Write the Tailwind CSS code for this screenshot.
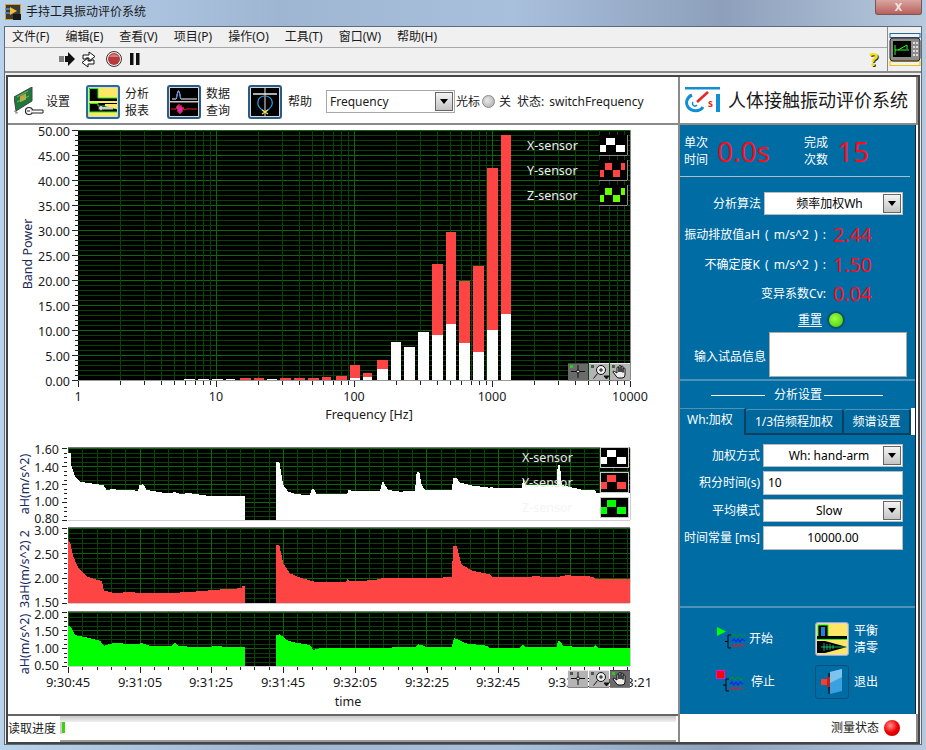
<!DOCTYPE html>
<html lang="zh">
<head>
  <meta charset="UTF-8">
  <title>手持工具振动评价系统</title>
  <script src="https://cdn.jsdelivr.net/npm/@tailwindcss/browser@4"></script>
</head>
<body class="relative w-[926px] h-[750px] overflow-hidden font-['Noto_Sans','Noto_Sans_CJK_SC',sans-serif] text-[#1a1a1a] bg-[linear-gradient(90deg,#b9d3ec_0%,#9fb6d2_30%,#a9c0dc_55%,#8d9fbb_78%,#b7c9dd_100%)]">

<!-- title bar -->
<div class="flex items-center h-[26px] pl-[5px] pb-[3px]">
  <svg width="16" height="16" viewBox="0 0 16 16">
    <rect x="0" y="0" width="16" height="16" fill="#d8a02a"/>
    <rect x="1" y="1" width="14" height="14" fill="#3a3a3a"/>
    <path d="M5 3 L12 7 L5 11 Z" fill="#f0c030"/>
    <path d="M0 5 H5 M0 9 H5" stroke="#5a8fd0" stroke-width="1.5"/>
    <rect x="8" y="10" width="8" height="6" fill="#1a1a1a"/>
  </svg>
  <span class="ml-[5px] text-[12px] leading-none">手持工具振动评价系统</span>
  <div class="absolute top-0 left-[875px] w-[47px] h-[15px] rounded-b-[3px] border border-t-0 border-[#7a5555] bg-[linear-gradient(#d9a5a0,#b8605c)] flex items-center justify-center">
    <span class="text-white/80 text-[11px] font-bold leading-[12px]">X</span>
  </div>
</div>

<!-- window -->
<div class="ml-[4px] w-[918px] h-[719px] border border-[#5d6b7a] bg-[#f0f0f0] flex flex-col">
  <div class="flex h-[46px] border-b-2 border-[#8a8a8a]">
    <div class="flex-1 flex flex-col">
      <!-- menu -->
      <div class="flex items-center h-[21px] pl-[7px] gap-[16px] text-[12px] border-b border-[#a8a8a8] mr-[-34px] relative">
        <span>文件(F)</span><span>编辑(E)</span><span>查看(V)</span><span>项目(P)</span><span>操作(O)</span><span>工具(T)</span><span>窗口(W)</span><span>帮助(H)</span>
      </div>
      <!-- run toolbar -->
      <div class="flex items-center h-[24px] pl-[54px]">
        <svg width="17" height="16" viewBox="0 0 17 16">
          <path d="M0 6H1M0 8H1M0 10H1M2 5V11M4 5V11" stroke="#111" stroke-width="1"/>
          <path d="M6 5H9V1L16 8L9 15V11H6Z" fill="#111"/>
        </svg>
        <svg class="ml-[4px]" width="17" height="17" viewBox="0 0 17 17">
          <path d="M3 8 V4 H9 V1 L15 5.5 L9 10 V7 H6 V8 Z" fill="#fff" stroke="#111"/>
          <path d="M14 9 V13 H8 V16 L2 11.5 L8 7 V10 H11 V9 Z" fill="#fff" stroke="#111"/>
        </svg>
        <svg class="ml-[9px]" width="16" height="16" viewBox="0 0 16 16">
          <circle cx="8" cy="8" r="7.5" fill="#f4f4f4" stroke="#333"/>
          <circle cx="8" cy="8" r="6" fill="#b83a3a"/>
          <path d="M3 6 A6 6 0 0 1 13 6 Z" fill="#d67a7a"/>
        </svg>
        <svg class="ml-[8px]" width="10" height="12" viewBox="0 0 10 12">
          <rect x="0" y="0" width="3.5" height="12" fill="#111"/>
          <rect x="6" y="0" width="3.5" height="12" fill="#111"/>
        </svg>
      </div>
    </div>
    <!-- help + VI icon -->
    <div class="relative flex items-end pb-[3px] pr-[9px]">
      <span class="text-[18px] leading-none font-bold text-[#f2e313] [text-shadow:1px_1px_0_#222]">?</span>
    </div>
    <div class="w-[34px] border-l border-[#8a8a8a] flex flex-col items-center justify-center relative z-10 bg-[#f0f0f0]">
      <svg width="32" height="33" viewBox="0 0 32 33">
        <rect x="1" y="0.5" width="30" height="4" fill="none" stroke="#1f6a9a"/>
        <rect x="1" y="28.5" width="30" height="4" fill="none" stroke="#f2c200"/>
        <rect x="1" y="5" width="30" height="23" rx="3" fill="#8c8c8c" stroke="#222"/>
        <rect x="4" y="8" width="18" height="16" fill="#000"/>
        <path d="M6 12V22M6 17H20M9 17L18 12V16" stroke="#2f2" fill="none"/>
        <g fill="#ddd"><rect x="24" y="9" width="2" height="2"/><rect x="27" y="9" width="2" height="2"/><rect x="24" y="13" width="2" height="2"/><rect x="27" y="13" width="2" height="2"/><rect x="24" y="17" width="2" height="2"/><rect x="27" y="17" width="2" height="2"/><rect x="24" y="21" width="2" height="2"/><rect x="27" y="21" width="2" height="2"/></g>
      </svg>
    </div>
  </div>

  <!-- panes -->
  <div class="mt-[2px] mx-[1px] h-[669px] border-2 border-[#444] flex bg-white">
    <!-- left -->
    <div class="w-[672px] flex flex-col border-r-2 border-[#8a8a8a]">
      <!-- front panel toolbar -->
      <div class="relative h-[48px] pt-[3px] border-b-2 border-[#8a8a8a] flex items-center text-[12px]">
        <svg class="ml-[6px]" width="30" height="29" viewBox="0 0 30 29">
          <path d="M0 10 L18 0 V14 L2 24 Z" fill="#1e7a3a" stroke="#444"/>
          <rect x="6" y="8" width="6" height="6" fill="#c9a23a" transform="skewY(-25) translate(0 4)"/>
          <path d="M3 10 L14 4 M3 15 L15 9" stroke="#7ad07a" stroke-width="0.8"/>
          <path d="M0 24 L4 26 M2 24 V27" stroke="#888"/>
          <circle cx="15" cy="24" r="3.5" fill="#fff" stroke="#222" stroke-width="1.2"/>
          <path d="M18 23 H29 V26 H18 M13 24 H16" fill="#fff" stroke="#222" stroke-width="1"/>
        </svg>
        <span class="ml-[2px] w-[24px]">设置</span>
        <div class="ml-[16px] w-[34px] h-[34px] rounded-[3px] border-2 border-[#2a6a96] bg-[#d8d8d8] p-[1px]">
          <svg width="28" height="28" viewBox="0 0 28 28">
            <rect width="28" height="28" fill="#ffe766"/>
            <rect x="0" y="0" width="9" height="13" fill="#000"/>
            <rect x="9" y="10" width="19" height="3" fill="#000"/>
            <path d="M0.5 13 V0.5 H9 V10 H28" stroke="#1f1" fill="none"/>
            <path d="M0 15 H28 V24 L0 24 Z" fill="#000"/>
            <path d="M0.5 24 V15.5 H9 V18 H16 L28 21" stroke="#1f1" fill="none"/>
            <path d="M16 18 L28 21 V16 H16Z" fill="#ffe766"/>
            <path d="M0.5 24 H28" stroke="#1f1"/>
            <circle cx="12" cy="20" r="2.5" fill="#ddd" stroke="#333"/><rect x="14" y="19" width="10" height="2.5" fill="#ccc"/>
          </svg>
        </div>
        <div class="ml-[5px] w-[24px] leading-[17px]">分析<br>报表</div>
        <div class="ml-[18px] w-[34px] h-[34px] rounded-[3px] border-2 border-[#2a5a86] bg-[#d8d8d8] p-[1px]">
          <svg width="28" height="28" viewBox="0 0 28 28">
            <rect width="28" height="28" fill="#000"/>
            <rect y="13" width="28" height="1.5" fill="#c8c8c8"/>
            <path d="M2 11 H6 C7 11 7 3 8.5 3 C10 3 10 11 11 11 H27" stroke="#fff" fill="none"/>
            <path d="M5 11 C7 11 7 4 8.5 4 C10 4 10 11 12 11" stroke="#5070ff" fill="none"/>
            <path d="M1 21 H6 M16 21 H27" stroke="#e22" stroke-width="1.2"/>
            <path d="M6 21 L7 18 L8 24 L9 16 L10 26 L11 17 L12 24 L13 19 L14 22 L16 21" stroke="#e22" fill="none"/>
            <path d="M7 21 L8 17 L9 25 L10 18 L11 25 L12 19" stroke="#d03af0" fill="none" stroke-width="0.7"/>
          </svg>
        </div>
        <div class="ml-[5px] w-[24px] leading-[17px]">数据<br>查询</div>
        <div class="ml-[18px] w-[34px] h-[34px] rounded-[3px] border-2 border-[#2a5a86] bg-[#d8d8d8] p-[1px]">
          <svg width="28" height="28" viewBox="0 0 28 28">
            <rect width="28" height="28" fill="#000"/>
            <path d="M2 6 H26" stroke="#e8e8e8" stroke-width="1.5"/>
            <path d="M14 0 V28" stroke="#e8e8e8"/>
            <path d="M13 8 C6 9 5 17 10 21 L14 24 L18 21 C24 16 21 9 15 8" stroke="#2aa0e8" stroke-width="1.2" fill="none"/>
            <path d="M11 22 L17 26 M17 22 L11 26" stroke="#ffe640" stroke-width="1.2"/>
          </svg>
        </div>
        <span class="ml-[6px] w-[24px]">帮助</span>
        <!-- frequency select -->
        <div class="ml-[14px] w-[129px] h-[23px] border border-[#a8a8a8] bg-white flex items-center pl-[3px] pr-[1px]">
          <span class="flex-1 text-[12px]">Frequency</span>
          <span class="w-[18px] h-[19px] border border-[#666] bg-[linear-gradient(#f4f4f4,#c4c4c4)] flex items-center justify-center"><span class="border-x-[4px] border-x-transparent border-t-[5px] border-t-black"></span></span>
        </div>
        <span class="ml-[1px]">光标</span>
        <span class="ml-[2px] w-[13px] h-[13px] rounded-full border border-[#888] bg-[radial-gradient(circle_at_40%_40%,#e8e8e8,#a8a8a8)]"></span>
        <span class="ml-[4px]">关</span>
        <span class="ml-[6px]">状态:</span>
        <span class="ml-[5px]">switchFrequency</span>
      </div>

      <!-- charts -->
      <div class="h-[589px] relative">
        <svg id="plots" class="block overflow-visible" width="670" height="589" viewBox="8 125 670 589"></svg>
      </div>

      <!-- progress -->
      <div class="h-[28px] border-t-2 border-[#666] flex text-[12px]">
        <span class="w-[52px] self-center">读取进度</span>
        <div class="flex-1 mr-[2px] flex flex-col">
          <div class="h-[6px] bg-[linear-gradient(#c8c8c8,#f0f0f0)]"></div>
          <div class="flex-1 relative border-b-2 border-[#999]">
            <div class="absolute left-0 top-0 bottom-[6px] w-[2px] bg-[#ccc]"></div>
            <div class="absolute left-[2px] top-0 bottom-[7px] w-[3px] bg-[#40d010]"></div>
          </div>
        </div>
      </div>
    </div>

    <!-- right -->
    <div class="flex-1 flex flex-col">
      <div class="h-[48px] border-b-2 border-r-2 border-[#8a8a8a] flex items-center pl-[5px]">
        <svg width="36" height="26" viewBox="0 0 36 26">
          <path d="M0 0 H35 V2.5 H0Z M31 7 H35 V25 H31Z" fill="#0f8fd4"/>
          <path d="M7 8 C2 10 0 16 3 20 C7 25 15 25 18 20" stroke="#0f8fd4" stroke-width="3" fill="none"/>
          <path d="M12 15 L23 5" stroke="#e8262a" stroke-width="2.6"/>
          <path d="M8 15 A2.5 2.5 0 1 0 12 18" stroke="#0f8fd4" stroke-width="1.5" fill="none"/>
          <text x="23" y="20" font-size="10" font-weight="700" fill="#e8262a">s</text>
        </svg>
        <span class="ml-[7px] text-[18px] leading-none">人体接触振动评价系统</span>
      </div>

      <div class="flex-1 w-[236px] bg-[#006ca4] text-white text-[12px] flex flex-col border-r border-[#123]">
        <!-- counters -->
        <div class="h-[52px] mr-[5px] border-b border-[#a9bfcc] flex items-center pl-[4px] pt-[1px]">
          <div class="w-[24px] leading-[17px]">单次<br>时间</div>
          <span class="ml-[9px] w-[87px] text-[28px] leading-none text-[#ff0c1c]">0.0s</span>
          <div class="w-[24px] leading-[17px]">完成<br>次数</div>
          <span class="ml-[9px] text-[28px] leading-none text-[#ff0c1c]">15</span>
        </div>

        <!-- results -->
        <div class="h-[204px] border-b-2 border-[#4d93b8] flex flex-col pt-[15px]">
          <div class="flex items-center h-[23px]">
            <span class="w-[84px] text-right pr-[3px]">分析算法</span>
            <div class="w-[139px] h-[23px] bg-white border border-[#bbb] flex items-center text-black relative">
              <span class="flex-1 text-center pr-[8px]">频率加权Wh</span>
              <span class="absolute right-[1px] top-[1px] w-[18px] h-[19px] border border-[#666] bg-[linear-gradient(#f4f4f4,#c4c4c4)] flex items-center justify-center"><span class="border-x-[4px] border-x-transparent border-t-[5px] border-t-black"></span></span>
            </div>
          </div>
          <div class="flex items-center h-[30px] mt-[5px]">
            <span class="w-[146px] text-right whitespace-nowrap [word-spacing:2px]">振动排放值aH ( m/s^2 ) :</span>
            <span class="ml-[7px] text-[19.5px] leading-none text-[#ff0c1c]">2.44</span>
          </div>
          <div class="flex items-center h-[30px]">
            <span class="w-[146px] text-right whitespace-nowrap [word-spacing:2px]">不确定度K ( m/s^2 ) :</span>
            <span class="ml-[7px] text-[19.5px] leading-none text-[#ff0c1c]">1.50</span>
          </div>
          <div class="flex items-center h-[28px]">
            <span class="w-[146px] text-right">变异系数Cv:</span>
            <span class="ml-[7px] text-[19.5px] leading-none text-[#ff0c1c]">0.04</span>
          </div>
          <div class="flex items-center h-[24px]">
            <span class="ml-[118px] underline underline-offset-2">重置</span>
            <span class="ml-[5px] w-[18px] h-[18px] rounded-full border-2 border-[#0d4f78] bg-[radial-gradient(circle_at_40%_40%,#9cff40,#40c800)]"></span>
          </div>
          <div class="flex items-center h-[45px]">
            <span class="w-[86px] text-right mt-[4px]">输入试品信息</span>
            <div class="ml-[3px] w-[138px] h-[45px] bg-white border border-[#aaa]"></div>
          </div>
        </div>

        <!-- settings -->
        <div class="h-[227px] border-b-2 border-[#4d93b8] flex flex-col">
          <div class="h-[27px] pt-[1px] flex items-center">
            <span class="ml-[31px] w-[54px] h-px bg-white"></span>
            <span class="ml-[9px] w-[48px]">分析设置</span>
            <span class="ml-[2px] w-[59px] h-px bg-white"></span>
          </div>
          <div class="flex h-[27px] relative">
            <div class="w-[66px] pl-[7px] pt-[5px] leading-none border-t border-[#4d93b8] border-r-2 border-r-[#0a3f5f]">Wh:加权</div>
            <div class="w-[98px] mt-[1px] text-center pt-[6px] leading-none rounded-t-[3px] border-t border-[#4d93b8] border-r-2 border-b-2 border-r-[#0a3f5f] border-b-[#0a3f5f] bg-[#00679c]">1/3倍频程加权</div>
            <div class="w-[67px] mt-[1px] text-center pt-[6px] leading-none rounded-t-[3px] border-t border-[#4d93b8] border-r-2 border-b-2 border-r-[#0a3f5f] border-b-[#0a3f5f] bg-[#00679c]">频谱设置</div>
            <div class="flex-1 bg-white"></div>
          </div>
          <div class="pt-[9px] flex flex-col gap-[4px]">
            <div class="flex items-center h-[23px]">
              <span class="w-[80px] text-right">加权方式</span>
              <div class="ml-[3px] w-[140px] h-[23px] bg-white border border-[#bbb] text-black flex items-center relative">
                <span class="flex-1 text-center pr-[8px]">Wh: hand-arm</span>
                <span class="absolute right-[1px] top-[1px] w-[18px] h-[19px] border border-[#666] bg-[linear-gradient(#f4f4f4,#c4c4c4)] flex items-center justify-center"><span class="border-x-[4px] border-x-transparent border-t-[5px] border-t-black"></span></span>
              </div>
            </div>
            <div class="flex items-center h-[24px]">
              <span class="w-[80px] text-right">积分时间(s)</span>
              <div class="ml-[3px] w-[140px] h-[24px] bg-white border border-[#bbb] text-black flex items-center pl-[4px]">10</div>
            </div>
            <div class="flex items-center h-[23px]">
              <span class="w-[80px] text-right">平均模式</span>
              <div class="ml-[3px] w-[140px] h-[23px] bg-white border border-[#bbb] text-black flex items-center relative">
                <span class="flex-1 text-center pr-[8px]">Slow</span>
                <span class="absolute right-[1px] top-[1px] w-[18px] h-[19px] border border-[#666] bg-[linear-gradient(#f4f4f4,#c4c4c4)] flex items-center justify-center"><span class="border-x-[4px] border-x-transparent border-t-[5px] border-t-black"></span></span>
              </div>
            </div>
            <div class="flex items-center h-[24px]">
              <span class="w-[80px] text-right whitespace-nowrap">时间常量 [ms]</span>
              <div class="ml-[3px] w-[140px] h-[24px] bg-white border border-[#bbb] text-black flex items-center justify-center">10000.00</div>
            </div>
          </div>
        </div>

        <!-- actions -->
        <div class="flex-1 grid grid-cols-[135px_1fr] grid-rows-[43px_43px] pt-[9px]">
          <div class="flex items-center pl-[36px]">
            <svg width="30" height="26" viewBox="0 0 30 26" fill="none">
              <path d="M1 1 L10 5.5 L1 10 Z" fill="#00ff00"/>
              <path d="M15 9 H12 V22 H15 M9 15.5 H12" stroke="#000"/>
              <path d="M16 11 L18 8 L21 11 L24 8 L27 11 L29 9" stroke="#00a000"/>
              <path d="M16 15 L18 13 L20 16 L22 13 L24 16 L26 13 L29 15" stroke="#1020ff" stroke-width="1.2"/>
              <path d="M16 21 L18 18 L20 21 L22 18 L24 21 L26 18 L29 21" stroke="#ff1010"/>
            </svg>
            <span class="ml-[3px]">开始</span>
          </div>
          <div class="flex items-center pl-[0px]">
            <div class="w-[34px] h-[34px] rounded-[3px] border border-[#9ab] bg-[#d8d8d8] p-[1px]">
              <svg width="30" height="30" viewBox="0 0 30 30">
                <rect width="30" height="30" fill="#ffe766"/>
                <rect x="1" y="1" width="10" height="12" fill="#000" stroke="#1f1"/>
                <path d="M4 12 V3 H8 V12 Z M1 12H11" fill="#1e80e8"/>
                <path d="M0 13.5 H30" stroke="#000" stroke-width="3"/>
                <path d="M0 15.5 H30" stroke="#1f1"/>
                <path d="M0 17 H8 L30 23 L8 29 H0Z" fill="#000"/>
                <path d="M4 23 H28 M7 19 V27 M10 20 V26 M13 20 V26 M16 21 V25" stroke="#1d8" stroke-width="0.8"/>
              </svg>
            </div>
            <div class="ml-[5px] leading-[17px]">平衡<br>清零</div>
          </div>
          <div class="flex items-center pl-[36px]">
            <svg width="28" height="24" viewBox="0 0 28 24" fill="none">
              <rect x="0.5" y="0.5" width="8" height="8" fill="#ff0000" stroke="#e010e0"/>
              <path d="M13 9 H10 V21 H13 M7 15 H10" stroke="#000"/>
              <path d="M14 10 L16 7 L19 10 L22 7 L25 10 L27 8" stroke="#00a000"/>
              <path d="M14 14 L16 12 L18 15 L20 12 L22 15 L24 12 L27 14" stroke="#1020ff" stroke-width="1.2"/>
              <path d="M14 20 L16 17 L18 20 L20 17 L22 20 L24 17 L27 20" stroke="#ff1010"/>
            </svg>
            <span class="ml-[7px]">停止</span>
          </div>
          <div class="flex items-center">
            <div class="w-[34px] h-[34px] rounded-[3px] border border-[#0d4f78] flex items-center justify-center">
              <svg width="22" height="26" viewBox="0 0 22 26">
                <path d="M9 3 L21 0 V22 L9 25 Z" fill="#3aa0e0"/>
                <path d="M9 3 L21 0 V8 L9 14 Z" fill="#7cc4ee"/>
                <path d="M7 4 H9 V25 H7Z" fill="#0a2a44"/>
                <rect x="0" y="10" width="7" height="6" fill="#f04030"/>
                <rect x="6" y="8" width="3" height="10" fill="#c02018"/>
              </svg>
            </div>
            <span class="ml-[5px]">退出</span>
          </div>
        </div>
      </div>

      <!-- measure state -->
      <div class="h-[28px] flex items-center justify-end text-[12px] pr-[16px] border-r-2 border-[#8a8a8a]">
        <span>测量状态</span>
        <span class="ml-[5px] w-[16px] h-[16px] rounded-full bg-[radial-gradient(circle_at_40%_35%,#ff9090,#f00000_50%,#a00000)]"></span>
      </div>
    </div>
  </div>
</div>

<script>
  const MAJOR = "#0a6a0a", MINOR = "#084408";
  let out = "";

  function line(x1, y1, x2, y2, c, w) {
    out += `<line x1="${x1}" y1="${y1}" x2="${x2}" y2="${y2}" stroke="${c}" stroke-width="${w || 1}" shape-rendering="crispEdges"/>`;
  }
  function label(t, x, y, anchor, fill, size, rot) {
    const tr = rot ? ` transform="rotate(-90 ${x} ${y})"` : "";
    out += `<text x="${x}" y="${y}" text-anchor="${anchor}" dominant-baseline="central" fill="${fill || "#1a1a1a"}" font-size="${size || 12.5}"${tr}>${t}</text>`;
  }
  function rect(x, y, w, h, c) {
    out += `<rect x="${x}" y="${y}" width="${w}" height="${h}" fill="${c}" shape-rendering="crispEdges"/>`;
  }

  // graph palette buttons: cursor, zoom, pan
  function tools(x, y, active) {
    for (let i = 0; i < 3; i++) {
      const bx = x + i * 21;
      rect(bx, y, 20, 17, i === active ? "#6a6a6a" : "#b4b4b4");
      line(bx, y, bx + 20, y, i === active ? "#444" : "#e4e4e4");
      line(bx, y + 17, bx + 20, y + 17, "#808080");
      rect(bx + 2, y + 2, 3, 3, i === active ? "#2c2" : "#4a5a4a");
    }
    const h = x + 42;
    out += `<g fill="none" stroke="#111">
      <path d="M${x + 3} ${y + 8.5}H${x + 17}M${x + 10} ${y + 2}V${y + 15}"/><circle cx="${x + 10}" cy="${y + 8.5}" r="1.5" fill="#ddd"/>
      <circle cx="${x + 33}" cy="${y + 7}" r="4.5" fill="#eee"/><path d="M${x + 31} ${y + 7}h4M${x + 33} ${y + 5}v4M${x + 29.5} ${y + 10.5}l-4 5" />
      <path d="M${x + 36} ${y + 13}h5l-2.5 3z" fill="#111"/>
      <path d="M${h + 7} ${y + 10}V${y + 5}a1 1 0 0 1 2 0V${y + 9}V${y + 3.5}a1 1 0 0 1 2 0V${y + 9}V${y + 4}a1 1 0 0 1 2 0V${y + 9.5}V${y + 6}a1 1 0 0 1 2 0V${y + 12}q0 3 -3 3h-3q-2 0 -3 -2l-3 -4q0 -1.5 1.5 -0.5z" fill="#eee"/></g>`;
  }

  // legend swatch; three blocks or four, low/high like a step plot
  function swatch(x, y, w, h, c, four, framed) {
    rect(x, y, w, h, "#000");
    if (framed) {
      out += `<rect x="${x + .5}" y="${y + .5}" width="${w - 1}" height="${h - 1}" fill="none" stroke="#c8c8c8"/>`;
    } else {
      line(x, y + h, x + w, y + h, "#888"); line(x + w, y, x + w, y + h, "#888");
    }
    const lo = Math.round(y + h * .48), hi = Math.round(y + h * .15), bh = Math.round(h * .33);
    if (four) {
      rect(x + 1, lo, 4, bh, c); rect(x + 6, hi, 7, bh, c); rect(x + 14, lo, 7, bh, c); rect(x + 22, hi, 4, bh, c);
    } else {
      rect(x + 1, lo, 6, bh, c); rect(x + 7, hi, 9, bh, c); rect(x + 17, lo, 9, bh, c);
    }
  }

  // ---- band power plot
  rect(78, 130, 552, 250, "#000");
  for (let i = 0; i <= 250; i += 5) line(78, 130 + i, 630, 130 + i, i % 25 === 0 ? MAJOR : MINOR);
  for (let d = 0; d < 4; d++) {
    for (let m = 2; m < 10; m++) {
      const x = Math.round(78 + 138 * (d + Math.log10(m)));
      line(x, 130, x, 380, MINOR);
      line(x, 381, x, 385, "#222");
    }
    const X = 78 + 138 * d;
    if (d > 0) line(X, 130, X, 380, MAJOR);
    line(X, 381, X, 387, "#222");
    label(["1", "10", "100", "1000"][d], X, 396, "middle");
  }
  line(630, 381, 630, 387, "#222");
  label("10000", 630, 396, "middle");
  for (let i = 0; i <= 10; i++) {
    const y = 130 + i * 25;
    label((50 - i * 5).toFixed(2), 70, y + 1, "end");
    line(72, y, 78, y, "#222");
    if (i < 10) for (let k = 1; k < 5; k++) line(75, y + k * 5, 78, y + k * 5, "#222");
  }
  label("Band Power", 27, 254, "middle", "#1a2a50", 12.5, true);
  label("Frequency [Hz]", 369, 414, "middle");

  // x0, x1, red top, white top
  const bars = [[184,195,380,379],[198,209,380,379],[212,223,380,379],[226,235,380,379],[240,251,378,380],[254,264,378,380],[267,277,380,379],[280,291,378,380],[294,305,378,380],[308,319,378,380],[322,331,377,380],[336,347,376,380],[350,360,365,378],[363,372,373,377],[377,388,360,369],[391,401,380,342],[404,415,380,347],[418,429,380,332],[432,443,264,335],[446,456,232,324],[459,470,281,343],[473,484,266,352],[487,498,168,330],[501,511,135,314]];
  bars.forEach(b => {
    if (b[2] < 380) rect(b[0], b[2], b[1] - b[0], 380 - b[2], "#ff4444");
    if (b[3] < 380) rect(b[0], b[3], b[1] - b[0], 380 - b[3], "#fff");
  });
  line(78, 380.5, 630, 380.5, "#999", 1.5);
  line(630.5, 130, 630.5, 380, "#888");

  label("X-sensor", 527, 145, "start", "#eee");
  label("Y-sensor", 527, 170, "start", "#eee");
  label("Z-sensor", 527, 195, "start", "#eee");
  swatch(599, 135, 28, 20, "#fff", false);
  swatch(599, 160, 28, 20, "#ff4444", true);
  swatch(599, 185, 28, 20, "#66ff00", true);
  tools(568, 363, 0);

  // ---- strip charts
  function strip(y0, y1, nSub, ticks, labelY, name, nameY, color, parts) {
    rect(68, y0, 562, y1 - y0, "#000");
    const h = y1 - y0, step = h / (ticks.length - 1), minor = step / nSub;
    for (let y = 0; y <= h + .01; y += minor) line(68, Math.round(y0 + y), 630, Math.round(y0 + y), Math.abs(y / step - Math.round(y / step)) < .01 ? MAJOR : MINOR);
    for (let x = 0; x < 562; x += 14.34) {
      const i = Math.round(x / 14.34);
      line(Math.round(68 + x), y0, Math.round(68 + x), y1, i % 5 === 0 ? MAJOR : MINOR);
    }
    ticks.forEach((t, i) => {
      const y = Math.round(y0 + i * step);
      label(t, 59, labelY[i], "end", "#1a1a1a", 12.5);
      line(62, y, 67, y, "#222");
      if (i < ticks.length - 1) for (let k = 1; k < nSub; k++) line(64, Math.round(y + k * minor), 67, Math.round(y + k * minor), "#222");
    });
    label(name, 24, nameY, "middle", "#1a2a60", 12.5, true);
    parts.forEach(p => {
      out += `<polygon fill="${color}" shape-rendering="crispEdges" points="${p[0][0]},${y1} ${p.map(q => q.join(",")).join(" ")} ${p[p.length - 1][0]},${y1}"/>`;
    });
    line(68, y0 - .5, 630, y0 - .5, "#777");
    line(68, y1 + .5, 630, y1 + .5, "#d0d0d0");
    line(630.5, y0, 630.5, y1, "#d0d0d0");
  }

  // traced from the reference: left half and right half are in 3x crop pixels
  const conv = (arr, ox) => arr.map(p => [+(ox + p[0] / 3).toFixed(1), +(435 + p[1] / 3).toFixed(1)]);

  const whiteA = conv([[204,55],[212,55],[214,90],[225,125],[240,140],[270,145],[310,150],[320,165],[335,163],[415,167],[418,150],[430,148],[440,165],[500,175],[525,172],[540,176],[570,175],[630,183],[735,183]], 0);
  const whiteB = conv([[828,82],[838,82],[850,150],[865,170],[890,178],[930,180],[935,162],[942,162],[950,178],[1020,178]], 0).concat(conv([[22,178],[26,162],[35,168],[120,168],[128,138],[135,150],[145,165],[180,170],[225,167],[230,110],[238,112],[245,150],[255,165],[335,165],[340,128],[350,130],[360,143],[400,152],[450,158],[455,155],[460,160],[545,160],[550,130],[555,150],[650,150],[653,90],[660,90],[665,150],[730,165],[765,165],[770,175],[870,175]], 340));
  const redA = conv([[204,318],[210,320],[220,365],[235,400],[260,425],[305,438],[312,467],[340,473],[400,472],[420,475],[530,473],[580,470],[680,462],[725,460],[727,453],[735,453]], 0);
  const redB = conv([[828,330],[838,330],[850,385],[870,415],[900,428],[950,442],[1020,442]], 0).concat(conv([[18,440],[22,432],[30,438],[100,436],[125,430],[165,430],[210,430],[335,427],[340,333],[350,333],[365,390],[400,408],[450,418],[460,427],[560,427],[580,424],[650,426],[680,421],[760,425],[768,433],[870,433]], 340));
  const greenA = conv([[204,573],[212,575],[225,600],[250,605],[300,617],[312,632],[340,624],[360,625],[410,628],[425,624],[450,632],[515,632],[525,624],[535,634],[630,636],[640,633],[690,636],[735,636]], 0);
  const greenB = conv([[828,600],[840,598],[860,615],[880,622],[930,630],[940,645],[960,640],[1020,638]], 0).concat(conv([[20,640],[130,638],[225,636],[235,628],[245,630],[260,636],[335,636],[342,610],[352,612],[375,625],[440,632],[450,640],[540,638],[550,628],[556,636],[650,636],[654,618],[662,620],[670,634],[760,636],[765,630],[775,638],[870,638]], 340));

  strip(448, 520, 4, ["1.60", "1.40", "1.20", "1.00", "0.80"], [449, 467, 485, 501, 518], "aH(m/s^2)", 484, "#fff", [whiteA, whiteB]);
  strip(528, 603, 5, ["3.00", "2.50", "2.00", "1.50"], [530, 554, 578, 602], "3aH(m/s^2) 2", 569, "#ff4444", [redA, redB]);
  strip(612, 666, 4, ["2.00", "1.50", "1.00", "0.50"], [614, 631, 648, 665], "aH(m/s^2)", 644, "#00ff00", [greenA, greenB]);

  ["9:30:45", "9:31:05", "9:31:25", "9:31:45", "9:32:05", "9:32:25", "9:32:45", "9:33:05"].forEach((t, i) => {
    const x = Math.round(68 + i * 71.7);
    label(t, x, 682, "middle", "#1a1a1a", 13);
    line(x, 667, x, 673, "#222");
  });
  for (let x = 68; x < 630; x += 14.34) line(Math.round(x), 667, Math.round(x), 670, "#222");
  label("9:33:21", 630, 682, "middle", "#1a1a1a", 13);
  label("time", 348, 701, "middle");

  label("X-sensor", 522, 457, "start", "#e8e8e8");
  label("Y-sensor", 522, 482, "start", "#e8e8e8");
  label("Z-sensor", 522, 507, "start", "#f4f4f4");
  swatch(600, 447, 29, 21, "#fff", false, true);
  swatch(600, 472, 29, 21, "#ff4444", false, true);
  swatch(600, 497, 29, 21, "#00ff00", false, true);
  tools(568, 670, 2);

  document.getElementById("plots").innerHTML = out;
</script>
</body>
</html>
